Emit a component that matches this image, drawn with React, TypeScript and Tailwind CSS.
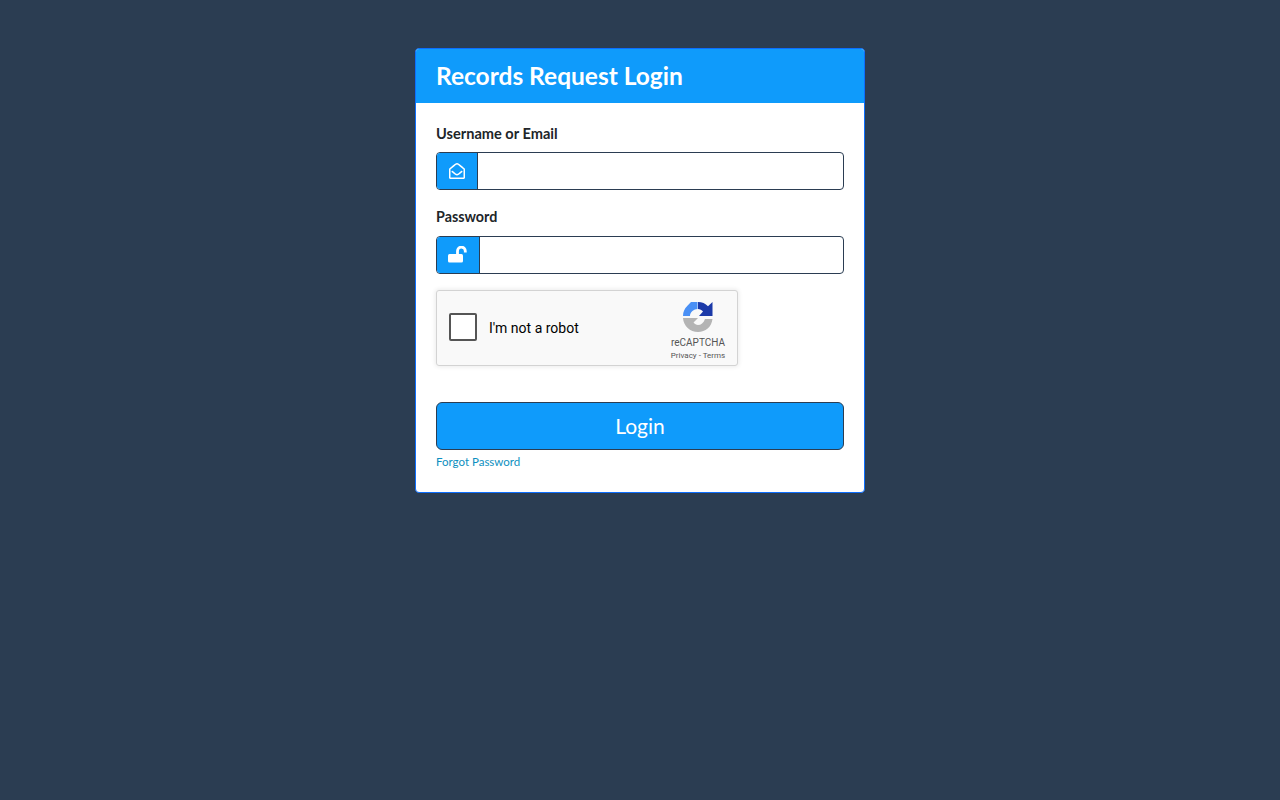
import { FaRegEnvelopeOpen } from "react-icons/fa";

const RecaptchaLogo = () => (
  <svg width="32" height="32" viewBox="0 0 32 32">
    <path d="M16 1 C20 1 23.500 2.600 26 5.200 L30.500 1 V15 H17 L21 10.500 C19.800 9 18 8 16 8 Z" fill="#1c3aa9" />
    <path d="M1 15 C1 11 2.600 7.600 5.200 5 L9 1 H15.500 V8 C12 8 8 11 8 15 Z" fill="#4a90f5" />
    <path d="M1 17 H16 L11.500 21.500 C12.700 23 14.200 24 16 24 C19 24 21.500 22 23 18 H30.500 C29.500 26 23.500 31 16 31 C8 31 1.500 25 1 17 Z" fill="#b4b4b4" />
  </svg>
);

const UnlockIcon = () => (
  <svg width="20" height="18" viewBox="0 0 20 18" fill="none">
    <rect x="0" y="8" width="15" height="8.500" rx="1.500" fill="white" />
    <path d="M9.500 8 V5 A3.900 3.900 0 0 1 17.300 5 V6.500" stroke="white" strokeWidth="2.800" />
  </svg>
);

const App = () => {
  return (
    <div className="min-h-screen bg-[#2b3d52] pt-12 font-['Lato',sans-serif]">
      <div className="mx-auto w-[450px] h-[445px] rounded border border-[#0d6efd] bg-white overflow-hidden">
        <div className="h-[54px] bg-[#0f9bfb] px-5 flex items-center">
          <h1 className="text-[24.5px] font-bold text-white">Records Request Login</h1>
        </div>
        <form className="px-5 pt-[20px]">
          <label className="block text-[14.6px] leading-[21px] font-bold text-[#212529] mb-2">Username or Email</label>
          <div className="flex h-[38px] rounded border border-[#2b3d52] overflow-hidden">
            <span className="w-[41px] bg-[#0f9bfb] border-r border-[#2b3d52] flex items-center justify-center text-white">
              <FaRegEnvelopeOpen size={16} />
            </span>
            <input className="flex-1 outline-none" />
          </div>
          <label className="block text-[14.3px] leading-[21px] font-bold text-[#212529] mt-4 mb-[9px]">Password</label>
          <div className="flex h-[38px] rounded border border-[#2b3d52] overflow-hidden">
            <span className="w-[43px] bg-[#0f9bfb] border-r border-[#2b3d52] flex items-center justify-center text-white">
              <UnlockIcon />
            </span>
            <input type="password" className="flex-1 outline-none" />
          </div>
          <div className="mt-4 w-[302px] h-[76px] rounded-[3px] border border-[#d3d3d3] bg-[#f9f9f9] shadow-[0_0_4px_1px_rgba(0,0,0,0.08)] flex items-center font-['Roboto',sans-serif]">
            <span className="ml-3 mb-[2px] w-7 h-7 rounded-[2px] border-2 border-[#555] bg-white" />
            <span className="ml-3 text-[14px] text-black">I'm not a robot</span>
            <div className="ml-auto w-[78px] flex flex-col items-center mt-[6px]">
              <RecaptchaLogo />
              <span className="text-[10px] leading-[12px] mt-[4px] text-[#555]">reCAPTCHA</span>
              <span className="text-[8px] leading-[12px] mt-[1px] text-[#555]">Privacy - Terms</span>
            </div>
          </div>
          <button type="button" className="mt-9 w-full h-12 rounded-md border border-[#2b3d52] bg-[#0f9bfb] text-white text-[21px]">Login</button>
          <a className="block mt-[3px] text-[11.500px] leading-[17px] text-[#0d8fc0]">Forgot Password</a>
        </form>
      </div>
    </div>
  );
};

export default App;
